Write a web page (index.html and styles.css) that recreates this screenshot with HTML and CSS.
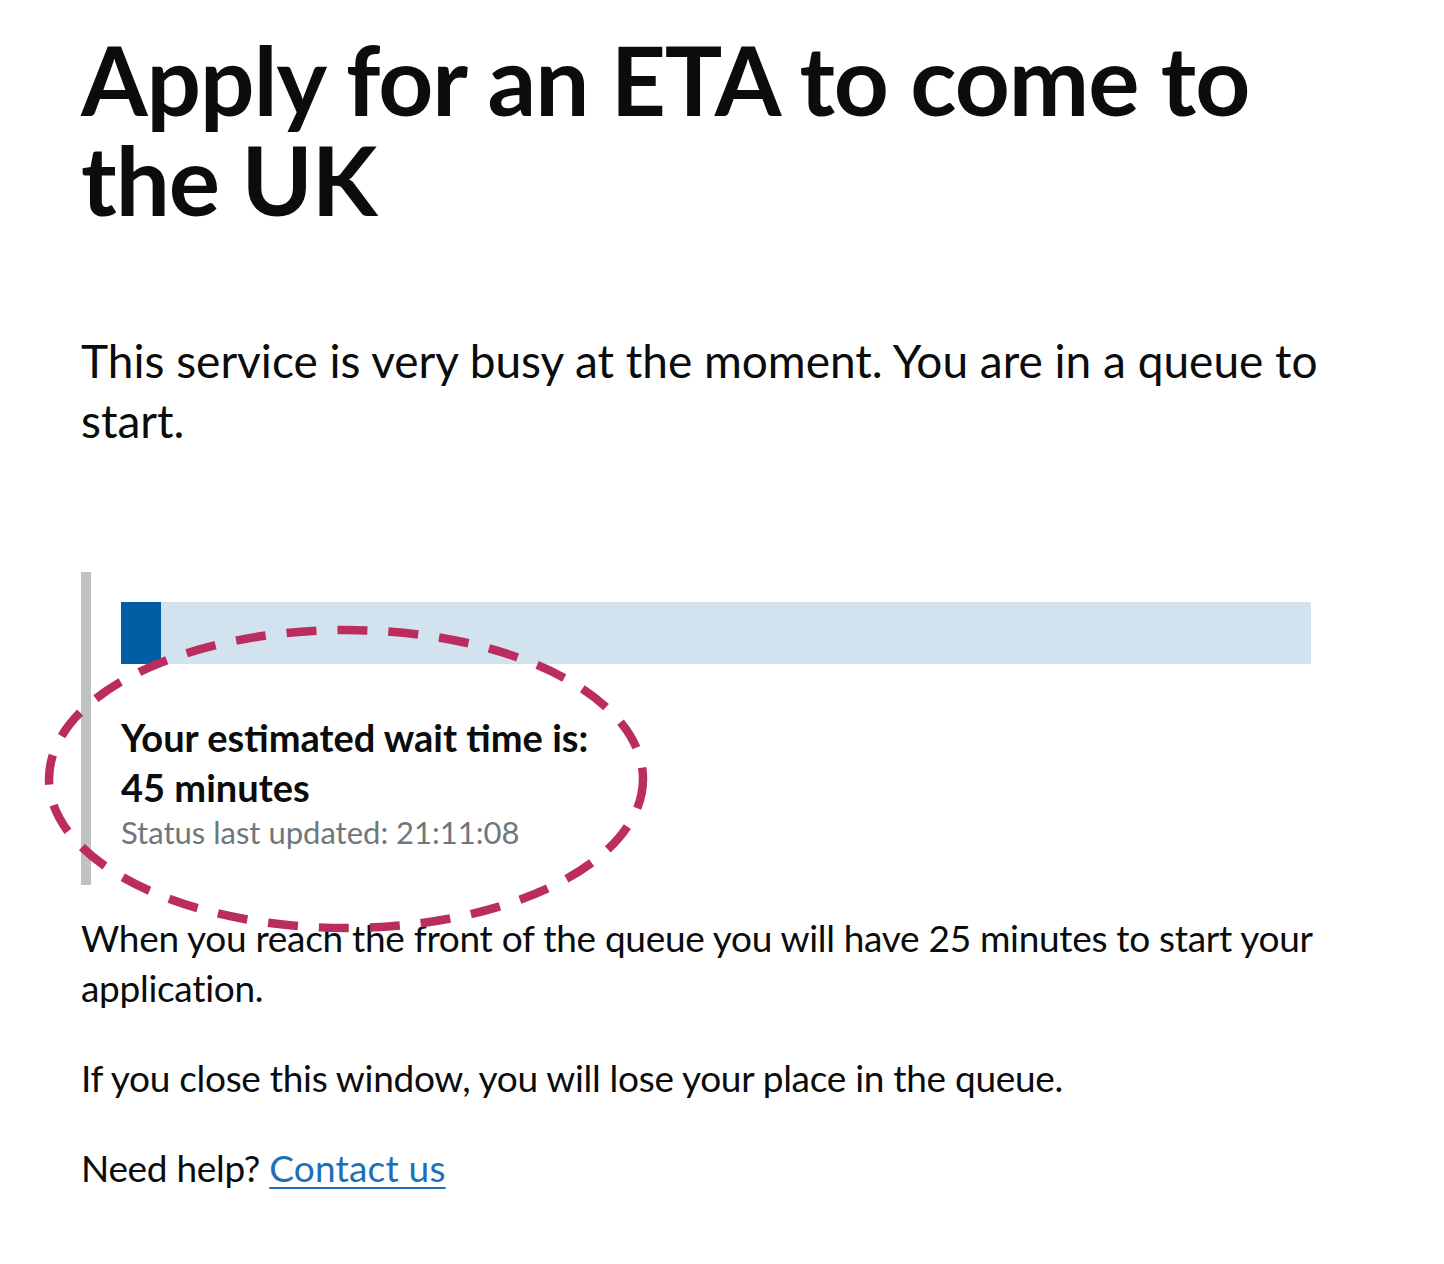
FILE: index.html
```html
<!DOCTYPE html>
<html lang="en">
<head>
<meta charset="utf-8">
<title>Apply for an ETA to come to the UK</title>
<link rel="stylesheet" href="styles.css">
</head>
<body>
<main class="page">
  <h1 class="title">Apply for an ETA to come to the UK</h1>
  <p class="lead">This service is very busy at the moment. You are in a queue to start.</p>
  <div class="inset">
    <div class="progress"><div class="progress-fill" style="width: 40px"></div></div>
    <p class="wait-label">Your estimated wait time is:</p>
    <p class="wait-value">45 minutes</p>
    <p class="status">Status last updated: 21:11:08</p>
    <svg class="annotation" width="620" height="320" viewBox="0 0 620 320" aria-hidden="true">
      <ellipse cx="310" cy="157" rx="297" ry="149" fill="none" stroke="#bb2d5e" stroke-width="8.5" stroke-dasharray="30 21"/>
    </svg>
  </div>
  <p class="body">When you reach the front of the queue you will have 25 minutes to start your application.</p>
  <p class="body">If you close this window, you will lose your place in the queue.</p>
  <p class="body">Need help? <a class="link" href="#">Contact us</a></p>
</main>
</body>
</html>
```
FILE: styles.css
```css
html, body {
  margin: 0;
  padding: 0;
  background: #ffffff;
}
body {
  font-family: "Lato", "Liberation Sans", sans-serif;
  color: #0b0c0c;
}
.page {
  margin-left: 81px;
  width: 1260px;
  padding-top: 29px;
}
.title {
  font-size: 96px;
  line-height: 100px;
  font-weight: 700;
  margin: 0 0 102px 0;
  letter-spacing: -1px;
}
.lead {
  font-size: 46px;
  line-height: 60px;
  font-weight: 400;
  margin: 0 0 121px 0;
}
.inset {
  position: relative;
  border-left: 10px solid #bfc1c3;
  padding: 30px 30px 33px 30px;
  margin: 0 0 28px 0;
}
.progress {
  height: 62px;
  background: #d2e2ee;
  margin-bottom: 48px;
}
.progress-fill {
  height: 100%;
  background: #005ea5;
}
.wait-label, .wait-value {
  font-size: 38px;
  line-height: 50px;
  font-weight: 700;
  margin: 0;
}
.status {
  font-size: 31px;
  line-height: 40px;
  color: #6f777b;
  margin: 0;
}
.annotation {
  position: absolute;
  left: -55px;
  top: 50px;
  pointer-events: none;
}
.body {
  font-size: 37px;
  line-height: 50px;
  letter-spacing: -0.3px;
  margin: 0 0 40px 0;
}
.link {
  color: #1d70b8;
  text-decoration: underline;
  text-decoration-thickness: 2px;
  text-underline-offset: 5px;
  letter-spacing: 0.2px;
}
```
